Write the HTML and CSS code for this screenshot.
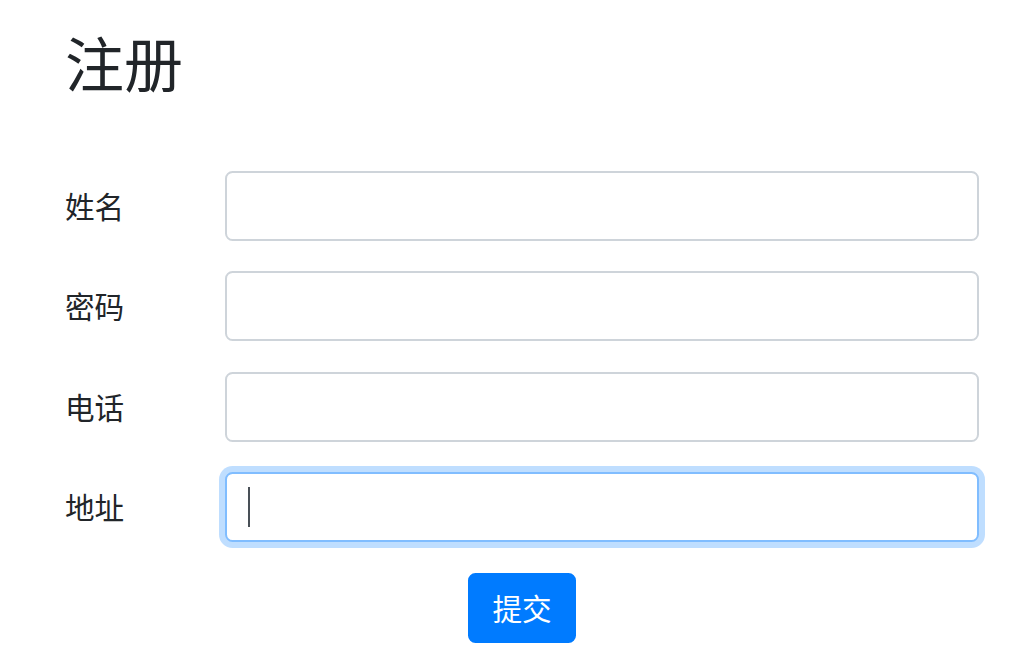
FILE: index.html
```html
<!DOCTYPE html>
<html lang="zh-CN">
<head>
<meta charset="utf-8">
<title>注册</title>
<link rel="stylesheet" href="styles.css">
</head>
<body>
<div class="container">
  <h2 class="title">注册</h2>
  <form class="form">
    <div class="row">
      <label class="label" for="name">姓名</label>
      <div class="field"><input class="input" id="name" type="text"></div>
    </div>
    <div class="row">
      <label class="label" for="pwd">密码</label>
      <div class="field"><input class="input" id="pwd" type="password"></div>
    </div>
    <div class="row">
      <label class="label" for="tel">电话</label>
      <div class="field"><input class="input" id="tel" type="text"></div>
    </div>
    <div class="row">
      <label class="label" for="addr">地址</label>
      <div class="field"><input class="input input-focus" id="addr" type="text"><span class="caret"></span></div>
    </div>
    <div class="actions">
      <button class="btn" type="button">提交</button>
    </div>
  </form>
</div>
</body>
</html>
```
FILE: styles.css
```css
* { box-sizing: border-box; }
html, body {
  margin: 0;
  padding: 0;
  background: #fff;
}
body {
  font-family: "Noto Sans CJK SC", "Noto Sans", "Liberation Sans", sans-serif;
  color: #212529;
}
.container {
  width: 914px;
  margin-left: 65px;
}
.title {
  margin: 26px 0 0 0;
  font-size: 59px;
  font-weight: 400;
  line-height: 72px;
  height: 72px;
}
.form {
  margin-top: 73px;
  display: flex;
  flex-direction: column;
  gap: 30.4px;
}
.row {
  display: flex;
  align-items: center;
  height: 70px;
}
.label {
  width: 160px;
  flex: none;
  font-size: 29.6px;
  line-height: 1.5;
}
.field {
  position: relative;
  flex: 1;
  height: 70px;
}
.input {
  display: block;
  width: 100%;
  height: 70px;
  border: 2px solid #ced4da;
  border-radius: 7.5px;
  padding: 0 22px;
  font-size: 29.6px;
  font-family: inherit;
  color: #495057;
  background: #fff;
  outline: none;
}
.input-focus {
  border-color: #80bdff;
  box-shadow: 0 0 0 6px rgba(0, 123, 255, 0.25);
}
.caret {
  position: absolute;
  left: 23px;
  top: 15px;
  width: 2px;
  height: 40px;
  background: #495057;
}
.actions {
  display: flex;
  justify-content: center;
}
.btn {
  width: 108px;
  height: 70px;
  padding: 0;
  border: 2px solid #007bff;
  border-radius: 7.5px;
  background: #007bff;
  color: #fff;
  font-family: inherit;
  font-size: 29.6px;
  line-height: 1;
}
```
